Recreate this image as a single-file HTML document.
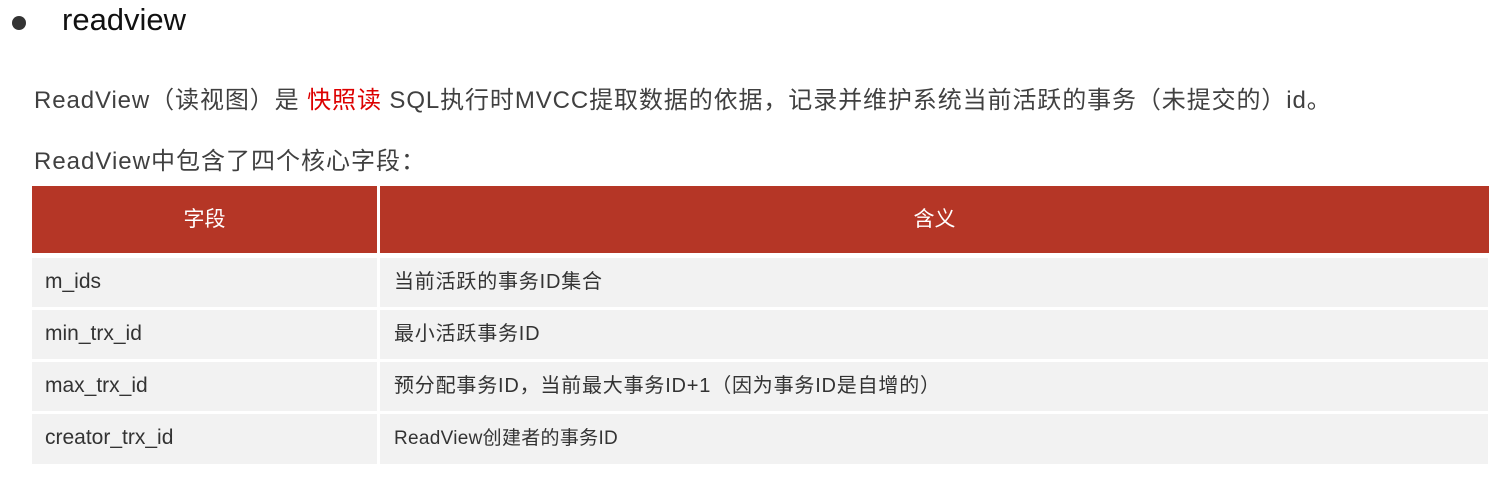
<!DOCTYPE html>
<html><head><meta charset="utf-8"><style>
body{margin:0;width:1509px;height:486px;background:#fff;font-family:"Liberation Sans","Noto Sans CJK SC",sans-serif;position:relative;overflow:hidden}
.a{position:absolute;white-space:nowrap}
.dot{position:absolute;left:12px;top:16px;width:14px;height:14px;border-radius:50%;background:#333}
.h{position:absolute;background:#b53626;height:67px;top:186px;color:#fff;font-size:21px;line-height:67px;text-align:center}
.c{position:absolute;background:#f2f2f2;color:#333;font-size:21px;padding-left:13px;box-sizing:border-box;white-space:nowrap}
.r{font-size:20px;letter-spacing:0.8px;padding-left:14px}
</style></head><body>
<div class="dot"></div>
<div class="a" style="left:62px;top:2px;font-size:31px;color:#111">readview</div>
<div class="a" style="left:34px;top:80px;font-size:24px;letter-spacing:0.9px;color:#404040">ReadView（读视图）是 <span style="color:#d00">快照读</span> SQL执行时MVCC提取数据的依据，记录并维护系统当前活跃的事务（未提交的）id。</div>
<div class="a" style="left:34px;top:141px;font-size:24px;letter-spacing:1px;color:#404040">ReadView中包含了四个核心字段：</div>
<div class="h" style="left:32px;width:345px">字段</div>
<div class="h" style="left:380px;width:1109px">含义</div>
<div class="c" style="left:32px;top:258px;width:345px;height:49px;line-height:47px">m_ids</div>
<div class="c r" style="left:380px;top:258px;width:1108px;height:49px;line-height:49px">当前活跃的事务ID集合</div>
<div class="c" style="left:32px;top:310px;width:345px;height:49px;line-height:47px">min_trx_id</div>
<div class="c r" style="left:380px;top:310px;width:1108px;height:49px;line-height:49px">最小活跃事务ID</div>
<div class="c" style="left:32px;top:362px;width:345px;height:49px;line-height:47px">max_trx_id</div>
<div class="c r" style="left:380px;top:362px;width:1108px;height:49px;line-height:49px">预分配事务ID，当前最大事务ID+1（因为事务ID是自增的）</div>
<div class="c" style="left:32px;top:414px;width:345px;height:50px;line-height:48px">creator_trx_id</div>
<div class="c r" style="left:380px;top:414px;width:1108px;height:50px;line-height:50px;font-size:19px;letter-spacing:0.3px">ReadView创建者的事务ID</div>
</body></html>
